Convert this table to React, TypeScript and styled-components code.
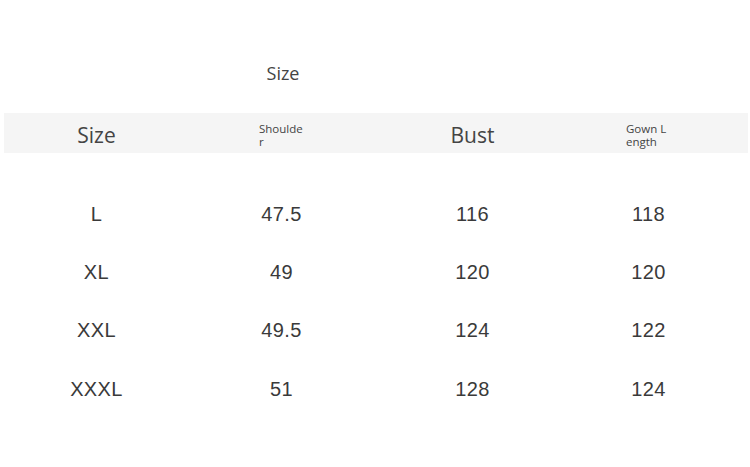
import React from "react";
import styled, { createGlobalStyle } from "styled-components";

const Global = createGlobalStyle`
  html, body { margin: 0; padding: 0; background: #fff; }
  body { font-family: "Open Sans", "Noto Sans", sans-serif; }
`;

const cols = "185px 185px 197px 155px 1fr";

const Page = styled.div`
  width: 750px;
  height: 467px;
  box-sizing: border-box;
  padding: 0 2px 0 4px;
  background: #fff;
`;

const TitleRow = styled.div`
  display: grid;
  grid-template-columns: ${cols};
  height: 113px;
`;

const Title = styled.div`
  grid-column: 2;
  margin-top: 61px;
  padding-left: 3px;
  height: 24px;
  line-height: 24px;
  font-size: 18px;
  color: #444;
  text-align: center;
  font-family: "Open Sans", sans-serif;
`;

const HeaderBand = styled.div`
  display: grid;
  grid-template-columns: ${cols};
  align-items: center;
  height: 40px;
  box-sizing: border-box;
  padding-top: 4px;
  background: #f5f5f5;
`;

const HeadCell = styled.div<{ $small?: boolean }>`
  display: flex;
  justify-content: center;
  color: #444;
  font-family: "Open Sans", sans-serif;
  font-size: ${(p) => (p.$small ? "11.5px" : "21px")};
  line-height: ${(p) => (p.$small ? "13px" : "26px")};
`;

const Wrap = styled.span`
  display: block;
  width: 45px;
  word-break: break-all;
  text-align: left;
`;

const Body = styled.div`
  padding-top: 32px;
`;

const Row = styled.div`
  display: grid;
  grid-template-columns: ${cols};
  align-items: center;
  height: 58.3px;
`;

const Cell = styled.div`
  text-align: center;
  font-family: "Liberation Sans", Arial, sans-serif;
  font-size: 20px;
  letter-spacing: 0.4px;
  color: #3a3a3a;
`;

const rows = [
  ["L", "47.5", "116", "118"],
  ["XL", "49", "120", "120"],
  ["XXL", "49.5", "124", "122"],
  ["XXXL", "51", "128", "124"],
];

export default function App() {
  return (
    <Page>
      <Global />
      <TitleRow>
        <Title>Size</Title>
      </TitleRow>
      <HeaderBand>
        <HeadCell>Size</HeadCell>
        <HeadCell $small>
          <Wrap>Shoulder</Wrap>
        </HeadCell>
        <HeadCell>Bust</HeadCell>
        <HeadCell $small>
          <Wrap>Gown Length</Wrap>
        </HeadCell>
      </HeaderBand>
      <Body>
        {rows.map((r) => (
          <Row key={r[0]}>
            {r.map((c, i) => (
              <Cell key={i}>{c}</Cell>
            ))}
          </Row>
        ))}
      </Body>
    </Page>
  );
}
